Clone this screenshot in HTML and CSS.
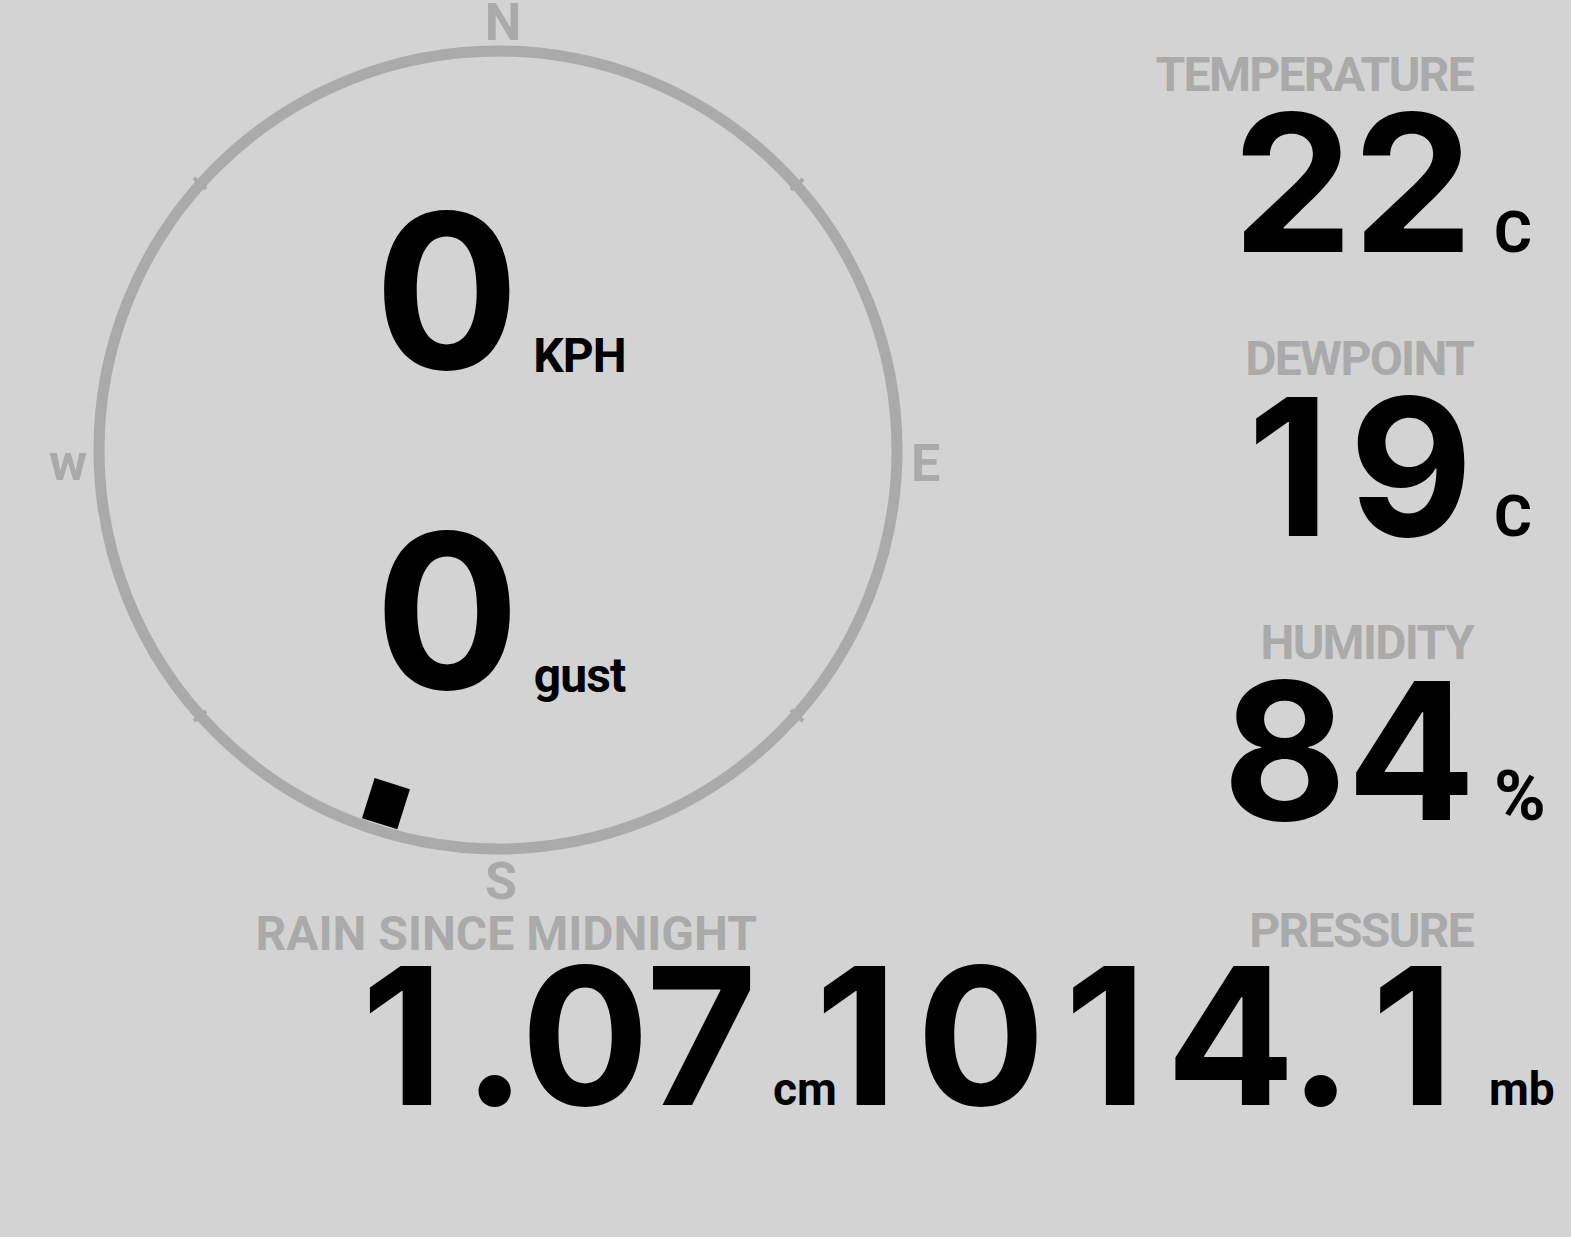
FILE: index.html
```html
<!DOCTYPE html>
<html lang="en">

<head>
    <meta charset="UTF-8">
    <meta name="viewport" content="width=device-width, initial-scale=1.0">
    <title>Weather Station</title>
    <link rel="stylesheet" href="styles.css">
</head>

<body>
    <main class="station">
        <div class="top">
            <section class="compass">
                <svg class="dial" width="1000" height="901" viewBox="0 0 1000 901">
                    <circle class="ring" cx="498" cy="450" r="399" />
                    <g class="ticks">
                        <line x1="206" y1="189" x2="194" y2="178" />
                        <line x1="791" y1="190" x2="803" y2="179" />
                        <line x1="206" y1="711" x2="194" y2="721" />
                        <line x1="791" y1="710" x2="803" y2="721" />
                    </g>
                    <text class="point" x="503" y="40" text-anchor="middle">N</text>
                    <text class="point" x="911" y="481">E</text>
                    <text class="point" x="501" y="899" text-anchor="middle">S</text>
                    <text class="point" x="49" y="480">w</text>
                    <!-- wind direction -->
                    <rect class="needle" x="-18" y="-392" width="37" height="42"
                        transform="translate(498 450) rotate(197.5)" />
                </svg>
                <div class="speed"><span class="num">0</span><span class="unit">KPH</span></div>
                <div class="speed"><span class="num">0</span><span class="unit">gust</span></div>
            </section>

            <section class="readings">
                <div class="reading">
                    <div class="label">TEMPERATURE</div>
                    <div class="value"><span class="num">22</span><span class="unit">C</span></div>
                </div>
                <div class="reading">
                    <div class="label">DEWPOINT</div>
                    <div class="value"><span class="num"><span class="one">1</span>9</span><span class="unit">C</span></div>
                </div>
                <div class="reading">
                    <div class="label">HUMIDITY</div>
                    <div class="value"><span class="num">84</span><span class="unit pct">%</span></div>
                </div>
            </section>
        </div>

        <div class="bottom">
            <div class="reading rain">
                <div class="label">RAIN SINCE MIDNIGHT</div>
                <div class="value"><span class="num"><span class="one">1</span>.07</span><span class="unit">cm</span></div>
            </div>
            <div class="reading pressure">
                <div class="label">PRESSURE</div>
                <div class="value"><span class="num"><span class="one">1</span>0<span class="one">1</span>4.<span class="one">1</span></span><span class="unit">mb</span></div>
            </div>
        </div>
    </main>
</body>

</html>
```

FILE: styles.css
```css
body {
    margin: 0;
    background: #d3d3d3;
    color: #000;
    font-family: 'Roboto', 'Noto Sans', sans-serif;
    font-weight: 700;
}

.station {
    width: 1571px;
}

.num {
    font-family: 'Inter', 'Noto Sans', sans-serif;
}

/* keep the "1" as wide as the other digits */
.one {
    padding: 0 0.1em;
}

.top {
    display: flex;
    height: 901px;
}

/* compass */

.compass {
    position: relative;
    flex: none;
    width: 1000px;
    height: 901px;
    display: flex;
    flex-direction: column;
    justify-content: center;
    align-items: center;
}

.dial {
    position: absolute;
    top: 0;
    left: 0;
    overflow: visible;
}

.ring {
    fill: none;
    stroke: #aaa;
    stroke-width: 11;
}

.ticks line {
    stroke: #aaa;
    stroke-width: 4;
}

.point {
    fill: #aaa;
    font-family: 'Roboto', 'Noto Sans', sans-serif;
    font-weight: 700;
    font-size: 52px;
}

.needle {
    fill: #000;
}

.speed {
    position: relative;
    display: flex;
    align-items: baseline;
    gap: 14px;
    height: 320px;
}

.speed .num {
    font-size: 215px;
    line-height: 320px;
}

.speed .unit {
    font-size: 48px;
    line-height: 48px;
    letter-spacing: -0.02em;
    position: relative;
    top: 3px;
}

/* readings */

.readings {
    flex: 1;
    display: flex;
    flex-direction: column;
    align-items: flex-end;
    gap: 71px;
    padding: 50px 98px 0 0;
}

.reading {
    display: flex;
    flex-direction: column;
    align-items: flex-end;
}

.label {
    color: #aaa;
    font-size: 48px;
    line-height: 50px;
    letter-spacing: -0.035em;
}

.rain .label {
    letter-spacing: 0;
    position: relative;
    top: 3px;
}

.value {
    display: flex;
    align-items: baseline;
    margin-top: 3px;
}

.value .num {
    font-size: 191px;
    line-height: 160px;
}

.value .unit {
    width: 80px;
    margin-left: 21px;
    margin-right: -101px;
    font-size: 58px;
    line-height: 58px;
}

.value .pct {
    font-size: 70px;
    margin-left: 18px;
}

.bottom {
    display: flex;
    padding: 5px 98px 0 0;
}

.rain {
    flex: none;
    width: 757px;
}

.pressure {
    flex: 1;
}

.bottom .value {
    margin-top: 0;
}

.bottom .value .unit {
    font-size: 46px;
    line-height: 46px;
    width: 70px;
    margin-left: 16px;
    margin-right: -86px;
}
```
